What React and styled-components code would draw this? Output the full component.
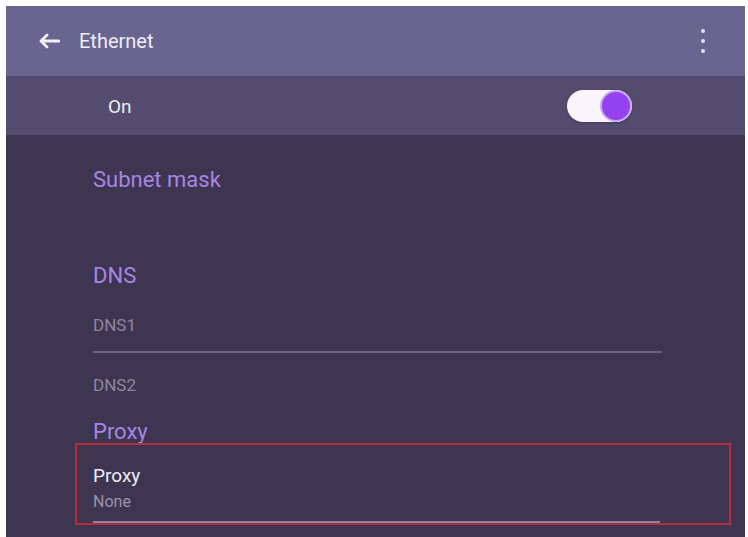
import React from "react";
import styled, { createGlobalStyle } from "styled-components";

const GlobalStyle = createGlobalStyle`
  body {
    margin: 0;
    background: #ffffff;
    font-family: "Roboto", "Noto Sans", "Liberation Sans", sans-serif;
  }
`;

const Screen = styled.div`
  margin: 6px 3px 0 6px;
  height: 531px;
  background: #3e3650;
  overflow: hidden;
  display: flex;
  flex-direction: column;
`;

const TopBar = styled.div`
  height: 70px;
  flex: none;
  background: #6a6490;
  display: flex;
  align-items: center;
  padding: 0 40px 0 32px;
`;

const BackButton = styled.div`
  width: 22px;
  height: 16px;
  display: flex;
  margin-right: 19px;
`;

const Title = styled.div`
  flex: 1;
  color: #efedf6;
  font-size: 20px;
  line-height: 24px;
`;

const Kebab = styled.div`
  display: flex;
  flex-direction: column;
  gap: 6px;
  margin-top: -1px;
`;

const Dot = styled.span`
  width: 4px;
  height: 4px;
  border-radius: 50%;
  background: #e6e2f0;
`;

const SwitchRow = styled.div`
  height: 59px;
  flex: none;
  background: #544c6f;
  display: flex;
  align-items: center;
  justify-content: space-between;
  padding: 0 113px 0 102px;
`;

const RowLabel = styled.div`
  color: #eeecf5;
  font-size: 19px;
  line-height: 24px;
  margin-top: 3px;
`;

const Track = styled.div`
  width: 65px;
  height: 32px;
  border-radius: 16px;
  background: #f8f6fb;
  display: flex;
  justify-content: ${(p) => (p.on ? "flex-end" : "flex-start")};
  box-shadow: 0 1px 3px rgba(0, 0, 0, 0.25);
`;

const Thumb = styled.div`
  width: 28px;
  height: 28px;
  border-radius: 50%;
  background: #9441ef;
  border: 2px solid #c9a8f4;
`;

const Content = styled.div`
  flex: 1;
  display: flex;
  flex-direction: column;
  align-items: flex-start;
  padding: 0 14px 0 87px;
`;

const SectionTitle = styled.div`
  color: #a586e4;
  font-size: 22px;
  line-height: 24px;
  margin-top: ${(p) => p.gap}px;
`;

const Field = styled.div`
  color: #8d879f;
  font-size: 17px;
  line-height: 22px;
  margin-top: ${(p) => p.gap}px;
`;

const Divider = styled.div`
  width: ${(p) => p.width}px;
  height: 2px;
  background: ${(p) => p.color || "#6a6584"};
  margin-top: ${(p) => p.gap}px;
`;

const Item = styled.div`
  align-self: stretch;
  margin: -1px 0 0 -18px;
  padding: 19px 0 0 16px;
  border: 2px solid ${(p) => (p.highlighted ? "#bb2a42" : "transparent")};
  display: flex;
  flex-direction: column;
`;

const ItemTitle = styled.div`
  color: #f0eff5;
  font-size: 19px;
  line-height: 24px;
`;

const ItemValue = styled.div`
  color: #9993aa;
  font-size: 16px;
  line-height: 20px;
  margin-top: 4px;
`;

function ArrowBack() {
  return (
    <svg width="22" height="16" viewBox="0 0 22 16">
      <path
        d="M21 8H3M9 2L3 8l6 6"
        fill="none"
        stroke="#f2f0f8"
        strokeWidth="2.8"
        strokeLinecap="round"
        strokeLinejoin="round"
      />
    </svg>
  );
}

export default function App() {
  return (
    <>
      <GlobalStyle />
      <Screen>
        <TopBar>
          <BackButton>
            <ArrowBack />
          </BackButton>
          <Title>Ethernet</Title>
          <Kebab>
            <Dot />
            <Dot />
            <Dot />
          </Kebab>
        </TopBar>

        <SwitchRow>
          <RowLabel>On</RowLabel>
          <Track on>
            <Thumb />
          </Track>
        </SwitchRow>

        <Content>
          <SectionTitle gap={33}>Subnet mask</SectionTitle>

          <SectionTitle gap={72}>DNS</SectionTitle>
          <Field gap={26}>DNS1</Field>
          <Divider width={569} gap={15} />
          <Field gap={21}>DNS2</Field>

          <SectionTitle gap={24}>Proxy</SectionTitle>
          <Item highlighted>
            <ItemTitle>Proxy</ItemTitle>
            <ItemValue>None</ItemValue>
            <Divider width={567} gap={9} color="#8a84a0" />
          </Item>
        </Content>
      </Screen>
    </>
  );
}
